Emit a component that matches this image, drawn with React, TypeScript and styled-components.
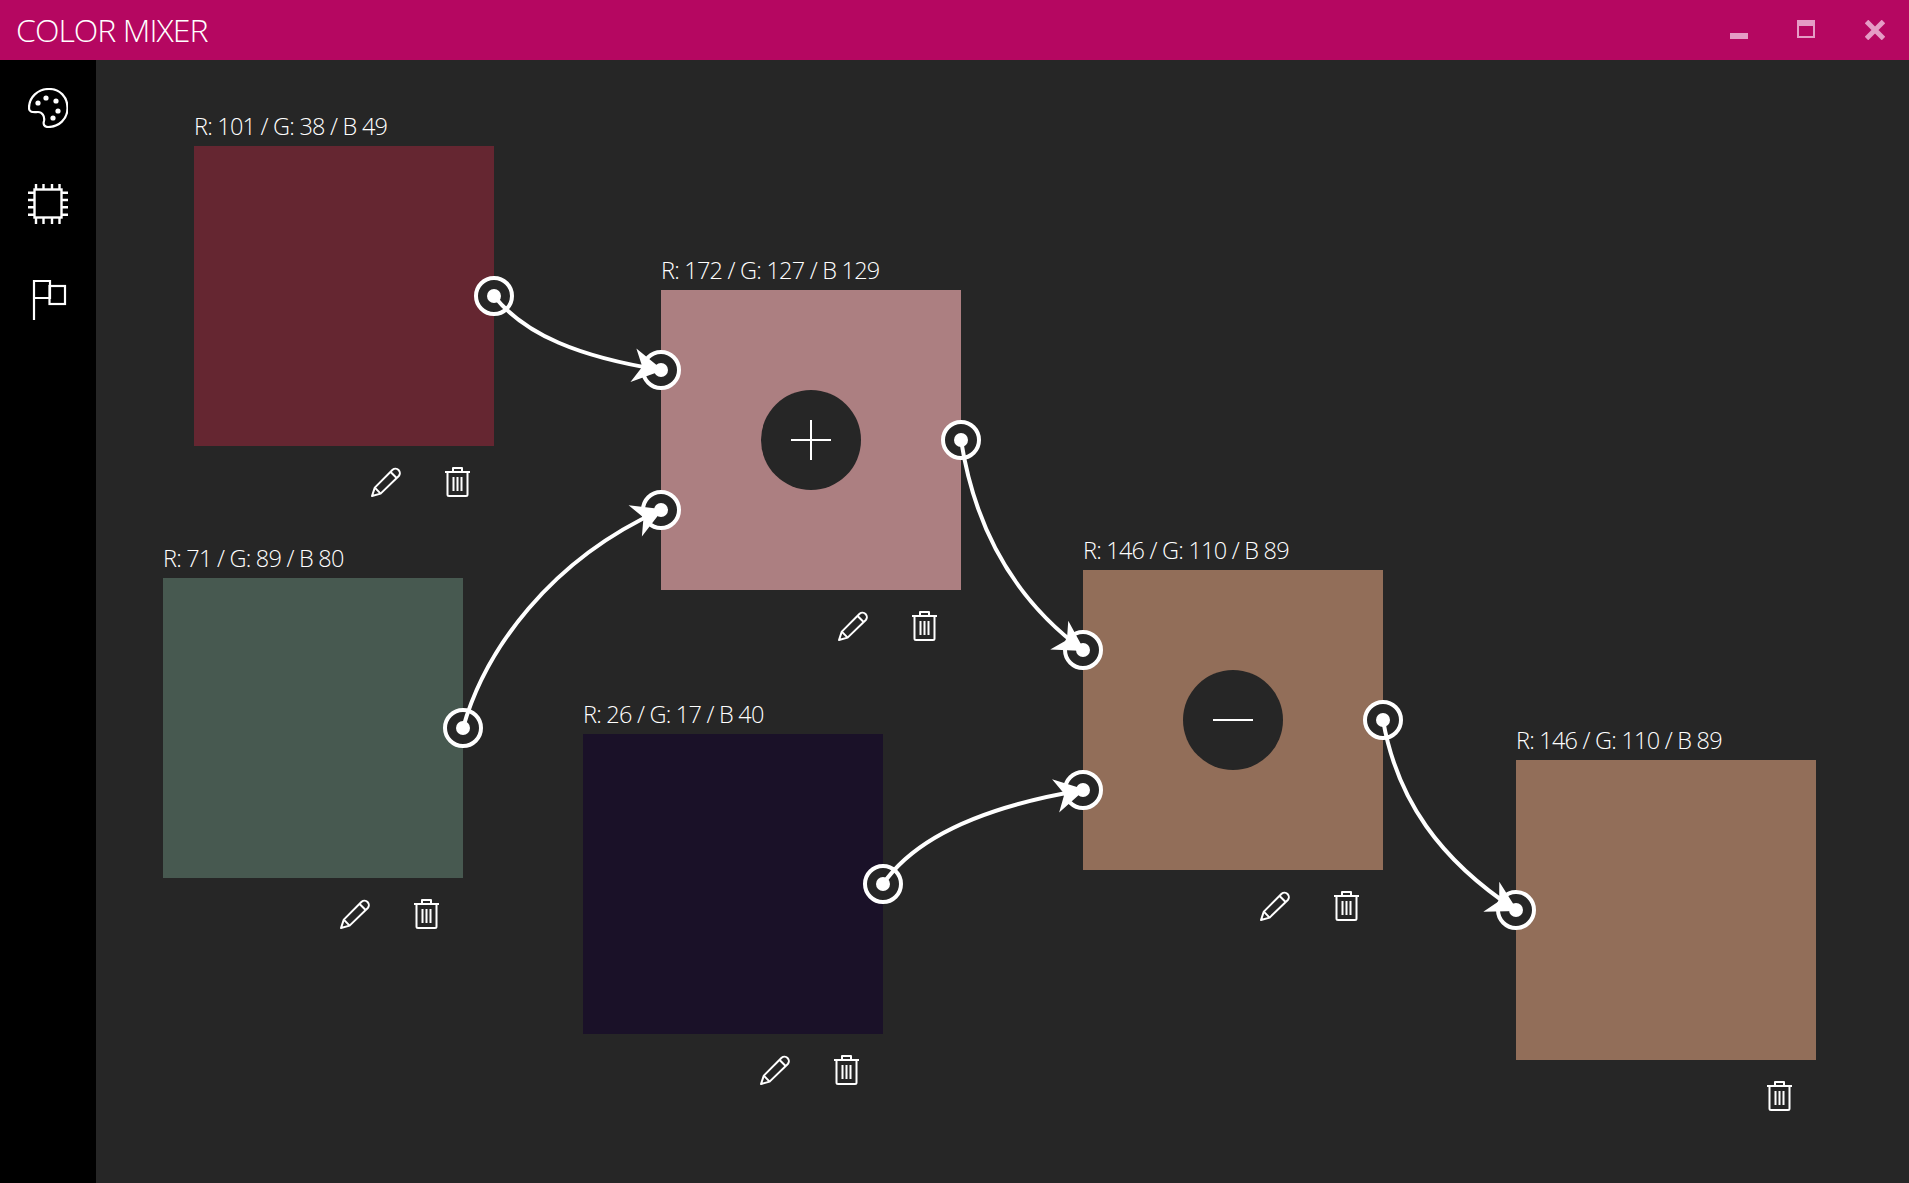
import React from "react";
import styled, { createGlobalStyle } from "styled-components";

const Global = createGlobalStyle`
  html, body { margin: 0; padding: 0; height: 100%; background: #262626; overflow: hidden; }
  #root { height: 100%; }
`;

const Window = styled.div`
  display: flex;
  flex-direction: column;
  width: 1909px;
  height: 1183px;
  font-family: "Open Sans", "Liberation Sans", sans-serif;
  color: #fff;
`;

const TitleBar = styled.header`
  flex: 0 0 60px;
  display: flex;
  align-items: center;
  justify-content: space-between;
  background: #b50761;
`;

const Title = styled.h1`
  margin: 0 0 0 16px;
  font-size: 32px;
  font-weight: 300;
  line-height: 60px;
  letter-spacing: -0.95px;
`;

const Controls = styled.div`
  display: flex;
  height: 60px;
`;

const ControlButton = styled.div`
  width: 68px;
  height: 60px;
  display: flex;
  align-items: center;
  justify-content: center;
  color: #e59cc5;
`;

const Body = styled.div`
  flex: 1;
  display: flex;
  min-height: 0;
`;

const Sidebar = styled.nav`
  flex: 0 0 96px;
  background: #000;
  display: flex;
  flex-direction: column;
  align-items: center;
  padding-top: 28px;
  gap: 56px;
  box-sizing: border-box;
`;

const SideIcon = styled.svg`
  width: 40px;
  height: 40px;
  display: block;
  color: #fff;
`;

const Canvas = styled.main`
  position: relative;
  flex: 1;
  background: #262626;
  overflow: hidden;
`;

const Wires = styled.svg`
  position: absolute;
  inset: 0;
  width: 100%;
  height: 100%;
  pointer-events: none;
  z-index: 3;
`;

const Node = styled.section<{ $x: number; $y: number }>`
  position: absolute;
  left: ${(p) => p.$x}px;
  top: ${(p) => p.$y}px;
  width: 300px;
`;

const Label = styled.div`
  height: 30px;
  line-height: 20px;
  font-size: 23.5px;
  font-weight: 300;
  letter-spacing: -0.78px;
  white-space: nowrap;
  color: #fff;
`;

const Swatch = styled.div<{ $color: string }>`
  position: relative;
  width: 300px;
  height: 300px;
  background: ${(p) => p.$color};
  display: flex;
  align-items: center;
  justify-content: center;
`;

const Operator = styled.div`
  width: 100px;
  height: 100px;
  border-radius: 50%;
  background: #262626;
  display: flex;
  align-items: center;
  justify-content: center;
`;

const Pin = styled.div<{ $side: "in" | "out"; $y: number }>`
  position: absolute;
  left: ${(p) => (p.$side === "in" ? "0" : "100%")};
  top: ${(p) => p.$y}px;
  width: 40px;
  height: 40px;
  box-sizing: border-box;
  transform: translate(-50%, -50%);
  border: 4px solid #fff;
  border-radius: 50%;
  background: #262626;
  display: flex;
  align-items: center;
  justify-content: center;
  &::after {
    content: "";
    width: 14px;
    height: 14px;
    border-radius: 50%;
    background: #fff;
  }
`;

const Actions = styled.div`
  display: flex;
  justify-content: flex-end;
  align-items: flex-start;
  gap: 44px;
  padding: 21px 24px 0 0;
`;

const ActionIcon = styled.svg`
  display: block;
  height: 30px;
  fill: none;
  stroke: #fff;
  stroke-width: 2;
  stroke-linejoin: round;
`;

const Pencil = () => (
  <ActionIcon viewBox="0 0 30 30" width={30}>
    <path d="M1 29 L3.8 20.6 L21.6 2.8 A4.4 4.4 0 0 1 27.8 9 L9.6 26.6 Z" />
    <path d="M19.6 5 L25.6 11 M3.8 20.6 L9.6 26.6" />
  </ActionIcon>
);

const Trash = () => (
  <ActionIcon viewBox="0 0 25 30" width={25}>
    <path d="M0 5 H25 M8 5 V1 H17 V5" />
    <path d="M2.5 5 V27.5 Q2.5 29 4 29 H21 Q22.5 29 22.5 27.5 V5" />
    <path d="M8.5 10 V24 M12.5 10 V24 M16.5 10 V24" />
  </ActionIcon>
);

const OpGlyph = ({ plus }: { plus?: boolean }) => (
  <svg width="40" height="40" viewBox="0 0 40 40" stroke="#fff" strokeWidth="2" fill="none">
    <path d="M0 20 H40" />
    {plus && <path d="M20 0 V40" />}
  </svg>
);

type NodeData = {
  x: number;
  y: number;
  color: string;
  label: string;
  pins: { side: "in" | "out"; y: number }[];
  op?: "plus" | "minus";
  edit?: boolean;
};

const nodes: NodeData[] = [
  { x: 194, y: 146, color: "rgb(101,38,49)", label: "R: 101 / G: 38 / B 49", pins: [{ side: "out", y: 150 }], edit: true },
  {
    x: 661, y: 290, color: "rgb(172,127,129)", label: "R: 172 / G: 127 / B 129",
    pins: [{ side: "in", y: 80 }, { side: "in", y: 220 }, { side: "out", y: 150 }], op: "plus", edit: true,
  },
  { x: 163, y: 578, color: "rgb(71,89,80)", label: "R: 71 / G: 89 / B 80", pins: [{ side: "out", y: 150 }], edit: true },
  { x: 583, y: 734, color: "rgb(26,17,40)", label: "R: 26 / G: 17 / B 40", pins: [{ side: "out", y: 150 }], edit: true },
  {
    x: 1083, y: 570, color: "rgb(146,110,89)", label: "R: 146 / G: 110 / B 89",
    pins: [{ side: "in", y: 80 }, { side: "in", y: 220 }, { side: "out", y: 150 }], op: "minus", edit: true,
  },
  { x: 1516, y: 760, color: "rgb(146,110,89)", label: "R: 146 / G: 110 / B 89", pins: [{ side: "in", y: 150 }] },
];

const wires = [
  { d: "M494 296 C525 335 580 357 661 370", tip: [661, 370], angle: 10 },
  { d: "M463 728 C485 650 550 560 661 510", tip: [661, 510], angle: -23 },
  { d: "M961 440 C975 530 1015 600 1083 650", tip: [1083, 650], angle: 32 },
  { d: "M883 884 C912 842 975 808 1083 790", tip: [1083, 790], angle: -12 },
  { d: "M1383 720 C1397 800 1440 860 1516 910", tip: [1516, 910], angle: 28 },
];

export default function App() {
  return (
    <Window>
      <Global />
      <TitleBar>
        <Title>COLOR MIXER</Title>
        <Controls>
          <ControlButton>
            <svg width="18" height="18" viewBox="0 0 18 18" fill="currentColor">
              <rect x="0" y="12" width="18" height="6" />
            </svg>
          </ControlButton>
          <ControlButton>
            <svg width="18" height="18" viewBox="0 0 18 18" fill="none" stroke="currentColor" strokeWidth="2" style={{ marginTop: -2, marginRight: 2 }}>
              <rect x="1" y="1" width="16" height="16" />
              <rect x="0" y="0" width="18" height="6" fill="currentColor" stroke="none" />
            </svg>
          </ControlButton>
          <ControlButton>
            <svg width="20" height="20" viewBox="0 0 20 20" stroke="currentColor" strokeWidth="5" fill="none">
              <path d="M1.5 1.5 L18.5 18.5 M18.5 1.5 L1.5 18.5" />
            </svg>
          </ControlButton>
        </Controls>
      </TitleBar>
      <Body>
        <Sidebar>
          <SideIcon viewBox="0 0 40 40" fill="none" stroke="currentColor" strokeWidth="2.2">
            <path d="M1 20 C1 9 10 1 21 1 C32 1 39.5 9 39.5 20 C39.5 31 31 39 20 39 C16 39 15 36 16 33 C17 28 14 24 10 24 C6 24 1 25 1 20 Z" />
            <g fill="currentColor" stroke="none">
              <circle cx="10" cy="15" r="2.6" />
              <circle cx="18" cy="10" r="2.6" />
              <circle cx="28" cy="13" r="2.6" />
              <circle cx="30" cy="23" r="2.6" />
              <circle cx="25" cy="30" r="2.6" />
            </g>
          </SideIcon>
          <SideIcon viewBox="0 0 40 40" fill="none" stroke="currentColor" strokeWidth="2.4">
            <rect x="6.5" y="5.5" width="27" height="28" />
            <path d="M8 0 V5 M15.5 0 V5 M24 0 V5 M31.5 0 V5 M8 34 V40 M15.5 34 V40 M24 34 V40 M31.5 34 V40" />
            <path d="M0 8.7 H6 M0 16 H6 M0 23.3 H6 M0 30.7 H6 M34 8.7 H40 M34 16 H40 M34 23.3 H40 M34 30.7 H40" />
          </SideIcon>
          <SideIcon viewBox="0 0 40 40" fill="none" stroke="currentColor" strokeWidth="2.2">
            <path d="M6 40 V1 H22 V18 H6" />
            <rect x="21.5" y="6" width="15.5" height="18" />
          </SideIcon>
        </Sidebar>
        <Canvas>
          {nodes.map((n) => (
            <Node key={`${n.x}-${n.y}`} $x={n.x - 96} $y={n.y - 60 - 30}>
              <Label>{n.label}</Label>
              <Swatch $color={n.color}>
                {n.op && (
                  <Operator>
                    <OpGlyph plus={n.op === "plus"} />
                  </Operator>
                )}
                {n.pins.map((p, i) => (
                  <Pin key={i} $side={p.side} $y={p.y} />
                ))}
              </Swatch>
              <Actions>
                {n.edit && <Pencil />}
                <Trash />
              </Actions>
            </Node>
          ))}
          <Wires viewBox="96 60 1813 1123" fill="none">
            {wires.map((w) => (
              <g key={w.d}>
                <path d={w.d} stroke="#fff" strokeWidth="4" strokeLinecap="round" />
                <polygon
                  points="2,0 -28,-17 -19,0 -28,17"
                  fill="#fff"
                  transform={`translate(${w.tip[0]} ${w.tip[1]}) rotate(${w.angle})`}
                />
              </g>
            ))}
          </Wires>
        </Canvas>
      </Body>
    </Window>
  );
}
